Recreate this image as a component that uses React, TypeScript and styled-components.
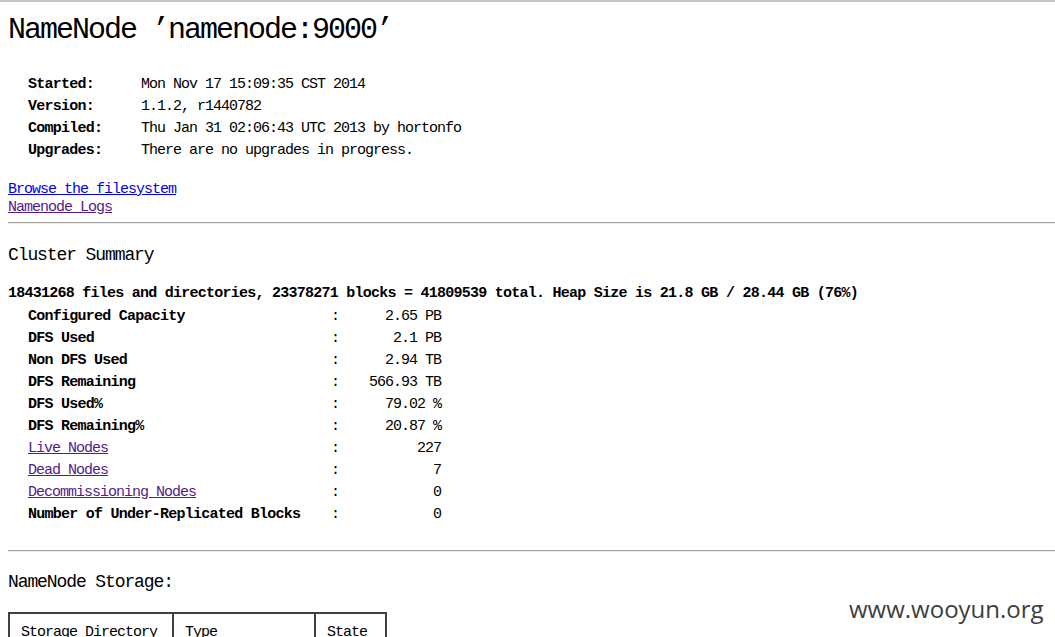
import React from "react";
import styled, { createGlobalStyle } from "styled-components";

const GlobalStyle = createGlobalStyle`
  html, body {
    margin: 0;
    padding: 0;
    background: #fff;
  }
  body {
    font-family: "Liberation Mono", "DejaVu Sans Mono", monospace;
    font-size: 15px;
    letter-spacing: -1px;
    color: #000;
  }
`;

const Page = styled.div`
  position: relative;
  border-top: 2px solid #c4c4c4;
  padding: 0 0 40px 8px;
`;

const Title = styled.h1`
  margin: 0;
  padding-top: 10px;
  font-size: 30px;
  line-height: 36px;
  letter-spacing: -2px;
  font-weight: normal;
`;

const InfoTable = styled.div`
  display: grid;
  grid-template-columns: 113px auto;
  grid-auto-rows: 22px;
  align-items: center;
  margin-top: 25px;
  padding-left: 20px;
  white-space: pre;
`;

const InfoLabel = styled.div`
  font-weight: bold;
  letter-spacing: -0.75px;
`;

const Links = styled.div`
  display: flex;
  flex-direction: column;
  align-items: flex-start;
  margin-top: 20px;
  line-height: 18px;
`;

const Link = styled.a<{ $visited?: boolean }>`
  color: ${(p) => (p.$visited ? "#551a8b" : "#0000ee")};
  text-decoration: underline;
`;

const Rule = styled.div<{ $top: number }>`
  margin-top: ${(p) => p.$top}px;
  border-top: 1px solid #a0a0a0;
  border-bottom: 1px solid #eeeeee;
`;

const Heading = styled.h3<{ $top: number }>`
  margin: ${(p) => p.$top}px 0 0 0;
  font-size: 18px;
  line-height: 24px;
  letter-spacing: -1.1px;
  font-weight: normal;
`;

const SummaryLine = styled.div`
  margin-top: 16px;
  line-height: 22px;
  font-weight: bold;
  letter-spacing: -0.75px;
  white-space: pre;
`;

const SummaryTable = styled.div`
  display: grid;
  grid-template-columns: 303px 8px 102px;
  grid-auto-rows: 22px;
  align-items: center;
  padding-left: 20px;
  white-space: pre;
`;

const SummaryLabel = styled.div`
  font-weight: bold;
  letter-spacing: -0.75px;
`;

const Colon = styled.div`
  text-align: center;
`;

const SummaryValue = styled.div`
  text-align: right;
`;

const StorageTable = styled.table`
  margin-top: 18px;
  border: 1px solid #404040;
  border-spacing: 0;
  border-collapse: separate;
  table-layout: fixed;
  width: 377px;
`;

const Cell = styled.td<{ $w: number }>`
  width: ${(p) => p.$w}px;
  box-sizing: border-box;
  border: 1px solid #404040;
  padding: 10px 10px 10px 11px;
  line-height: 18px;
  white-space: nowrap;
  overflow: hidden;
`;

const Watermark = styled.div`
  position: absolute;
  top: 590px;
  left: 849px;
  font-family: "Open Sans", "Noto Sans", sans-serif;
  font-size: 24px;
  letter-spacing: 0;
  color: #3e3e3e;
  pointer-events: none;
`;

const info: [string, string][] = [
  ["Started:", "Mon Nov 17 15:09:35 CST 2014"],
  ["Version:", "1.1.2, r1440782"],
  ["Compiled:", "Thu Jan 31 02:06:43 UTC 2013 by hortonfo"],
  ["Upgrades:", "There are no upgrades in progress."],
];

const summary: { label: string; value: string; link?: boolean }[] = [
  { label: "Configured Capacity", value: "2.65 PB" },
  { label: "DFS Used", value: "2.1 PB" },
  { label: "Non DFS Used", value: "2.94 TB" },
  { label: "DFS Remaining", value: "566.93 TB" },
  { label: "DFS Used%", value: "79.02 %" },
  { label: "DFS Remaining%", value: "20.87 %" },
  { label: "Live Nodes", value: "227", link: true },
  { label: "Dead Nodes", value: "7", link: true },
  { label: "Decommissioning Nodes", value: "0", link: true },
  { label: "Number of Under-Replicated Blocks", value: "0" },
];

export default function App() {
  return (
    <Page>
      <GlobalStyle />
      <Title>NameNode ’namenode:9000’</Title>

      <InfoTable>
        {info.map(([label, value]) => (
          <React.Fragment key={label}>
            <InfoLabel>{label}</InfoLabel>
            <div>{value}</div>
          </React.Fragment>
        ))}
      </InfoTable>

      <Links>
        <Link href="#browse">Browse the filesystem</Link>
        <Link href="#logs" $visited>
          Namenode Logs
        </Link>
      </Links>

      <Rule $top={5} />
      <Heading $top={19}>Cluster Summary</Heading>

      <SummaryLine>
        18431268 files and directories, 23378271 blocks = 41809539 total. Heap Size is 21.8 GB / 28.44 GB (76%)
      </SummaryLine>
      <SummaryTable>
        {summary.map((row) => (
          <React.Fragment key={row.label}>
            {row.link ? (
              <div>
                <Link href="#nodes" $visited>
                  {row.label}
                </Link>
              </div>
            ) : (
              <SummaryLabel>{row.label}</SummaryLabel>
            )}
            <Colon>:</Colon>
            <SummaryValue>{row.value}</SummaryValue>
          </React.Fragment>
        ))}
      </SummaryTable>

      <Rule $top={25} />
      <Heading $top={18}>NameNode Storage:</Heading>

      <StorageTable>
        <tbody>
          <tr>
            <Cell $w={164}>Storage Directory</Cell>
            <Cell $w={142}>Type</Cell>
            <Cell $w={71}>State</Cell>
          </tr>
          <tr>
            <Cell $w={164}>/hadoop/hdfs/nn</Cell>
            <Cell $w={142}>IMAGE_AND_EDITS</Cell>
            <Cell $w={71}>Active</Cell>
          </tr>
        </tbody>
      </StorageTable>

      <Watermark>www.wooyun.org</Watermark>
    </Page>
  );
}
